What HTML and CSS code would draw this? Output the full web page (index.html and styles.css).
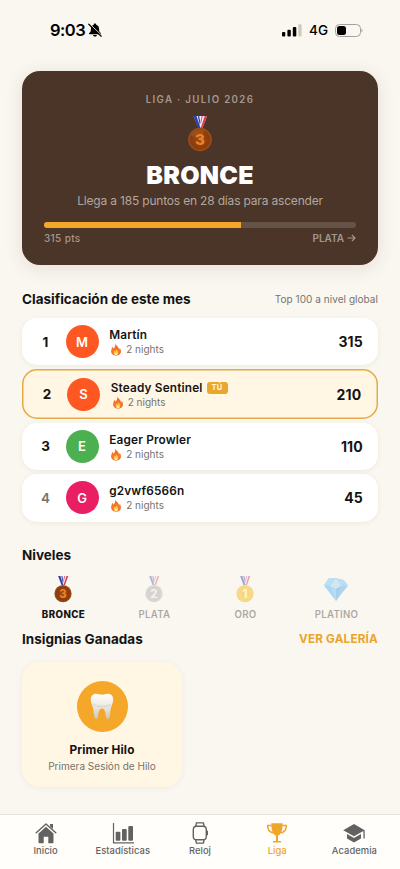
FILE: index.html
```html
<!DOCTYPE html>
<html lang="es">
<head>
<meta charset="utf-8">
<meta name="viewport" content="width=device-width, initial-scale=1">
<title>Liga</title>
<link rel="stylesheet" href="styles.css">
</head>
<body>
<svg class="defs" width="0" height="0" aria-hidden="true">
  <defs>
    <radialGradient id="g-bronze" cx=".5" cy=".5" r=".55"><stop offset="0" stop-color="#a04a10"/><stop offset=".7" stop-color="#8a3c0c"/><stop offset="1" stop-color="#a85a22"/></radialGradient>
    <radialGradient id="g-silver" cx=".5" cy=".5" r=".55"><stop offset="0" stop-color="#8f8f93"/><stop offset=".7" stop-color="#97979b"/><stop offset="1" stop-color="#adadb0"/></radialGradient>
    <radialGradient id="g-gold" cx=".5" cy=".5" r=".55"><stop offset="0" stop-color="#eeb000"/><stop offset=".7" stop-color="#f5b800"/><stop offset="1" stop-color="#e8b030"/></radialGradient>
    <linearGradient id="g-flame" x1="0" y1="0" x2="0" y2="1"><stop offset="0" stop-color="#ef5b30"/><stop offset=".6" stop-color="#f47a28"/><stop offset="1" stop-color="#f0602c"/></linearGradient>
    <linearGradient id="g-tooth" x1="0" y1="0" x2="0" y2="1"><stop offset="0" stop-color="#fffefb"/><stop offset=".45" stop-color="#eeebe5"/><stop offset="1" stop-color="#cfc8ba"/></linearGradient>
    <symbol id="ribbon" viewBox="0 0 24 12">
      <path d="M5.500 0h13.500l-4.500 12h-4z" fill="#f3eef5"/>
      <path d="M5.500 0h3l4 12h-2.500z" fill="#2b3fa8"/><path d="M9.800 0h1.400l1.300 7-.7 2z" fill="#3540a5"/>
      <path d="M19 0h-2.300l-4 12h1.900z" fill="#d43a50"/><path d="M14.700 0h-1l-1 5 .4 2z" fill="#cf4058"/>
    </symbol>
    <symbol id="flame" viewBox="0 0 12 14">
      <path d="M5.300.5C6 2.700 9.200 4.200 9.300 7c.5-.5.7-1.200.6-2 1 1 1.500 2.500 1.500 4 0 2.800-2.300 4.700-5.300 4.700S.7 11.700.7 9c0-1.900 1-3.100 1.200-4.800.9.500 1.300 1.200 1.400 2C4.700 4.800 5.600 3 5.300.5z" fill="url(#g-flame)"/>
      <path d="M6.100 5.900c.1 1.800 2.500 2.700 2.500 4.900 0 1.600-1.100 2.600-2.500 2.600s-2.700-.9-2.700-2.500c0-1.200.7-1.700.9-2.700.5.300.7.700.8 1.100.8-.8 1.200-1.800 1-3.400z" fill="#fdc94a"/>
      <ellipse cx="6.100" cy="11.900" rx="1.100" ry="1.400" fill="#fff0b5"/>
    </symbol>
  </defs>
</svg>

<main class="screen">
  <header class="status">
    <div class="status-left">
      <span class="clock">9:03</span>
      <svg width="14" height="14" viewBox="0 0 14 14"><path d="M7 .6c.8 0 1.200.5 1.200 1.200 2 .6 2.900 2.200 2.900 4.100 0 2.700.6 3.200 1.700 4.200.5.500.2 1.100-.4 1.100H1.600c-.6 0-.9-.6-.4-1.100C2.300 9.100 2.900 8.600 2.900 5.900c0-1.900.9-3.500 2.900-4.100C5.800 1.100 6.200.6 7 .6zM5.100 12h3.800c-.2 1-.9 1.600-1.900 1.600S5.300 13 5.100 12z"/><path d="M1.500.7l12 11.500" stroke="#faf7f0" stroke-width="1"/><path d="M.8 1.200l12.400 12" stroke="#000" stroke-width="1.200" stroke-linecap="round"/></svg>
    </div>
    <div class="status-right">
      <svg width="20" height="13" viewBox="0 0 20 13"><rect x="0" y="8" width="3.300" height="4.500" rx="1"/><rect x="5.400" y="5.700" width="3.400" height="6.800" rx="1"/><rect x="10.800" y="3" width="3.500" height="9.500" rx="1"/><rect x="16.300" y=".3" width="3.300" height="12.200" rx="1" fill="#cbcabd"/></svg>
      <span class="network">4G</span>
      <svg width="28" height="13" viewBox="0 0 28 13"><rect x=".5" y=".5" width="25" height="12" rx="4" fill="none" stroke="#a3a19b"/><rect x="2" y="2" width="9" height="9" rx="2.500"/><path d="M26.500 4.500c1.400.5 1.400 3.500 0 4z" fill="#a3a19b"/></svg>
    </div>
  </header>

  <section class="hero">
    <div class="hero-label">LIGA · JULIO 2026</div>
    <svg class="hero-medal" width="24" height="36" viewBox="0 0 24 36"><use href="#ribbon" width="24" height="12"/><circle cx="12" cy="23.500" r="11.800" fill="url(#g-bronze)"/><path d="M12 13.500a10 10 0 0 0-9 6l9 4 5-9a10 10 0 0 0-5-1z" fill="#b96c35" opacity=".35"/><text class="medal-digit" x="12" y="29" fill="#e8832a">3</text></svg>
    <h1 class="hero-title">BRONCE</h1>
    <p class="hero-sub">Llega a 185 puntos en 28 días para ascender</p>
    <div class="progress"><div class="progress-fill" style="width:63%"></div></div>
    <div class="hero-ends"><span class="points">315 pts</span><span class="next">PLATA <svg width="9" height="8" viewBox="0 0 9 8"><path d="M.5 4h7.500M4.900.9L8 4 4.900 7.100" fill="none" stroke="currentColor" stroke-width="1.200"/></svg></span></div>
  </section>

  <div class="heading heading-rank"><h2>Clasificación de este mes</h2><span class="note">Top 100 a nivel global</span></div>

  <section class="ranking">
    <article class="row">
      <span class="pos">1</span><span class="avatar orange">M</span>
      <div class="who"><div class="name">Martín</div><div class="streak"><svg width="12" height="14"><use href="#flame"/></svg>2 nights</div></div>
      <strong class="score">315</strong>
    </article>
    <article class="row me">
      <span class="pos">2</span><span class="avatar orange">S</span>
      <div class="who"><div class="name">Steady Sentinel<span class="tag">TÚ</span></div><div class="streak"><svg width="12" height="14"><use href="#flame"/></svg>2 nights</div></div>
      <strong class="score">210</strong>
    </article>
    <article class="row">
      <span class="pos">3</span><span class="avatar green">E</span>
      <div class="who"><div class="name">Eager Prowler</div><div class="streak"><svg width="12" height="14"><use href="#flame"/></svg>2 nights</div></div>
      <strong class="score">110</strong>
    </article>
    <article class="row">
      <span class="pos muted">4</span><span class="avatar pink">G</span>
      <div class="who"><div class="name">g2vwf6566n</div><div class="streak"><svg width="12" height="14"><use href="#flame"/></svg>2 nights</div></div>
      <strong class="score">45</strong>
    </article>
  </section>

  <div class="heading heading-levels"><h2>Niveles</h2></div>
  <section class="levels">
    <div class="level current"><svg width="18" height="27" viewBox="0 0 24 36"><use href="#ribbon" width="24" height="12"/><circle cx="12" cy="23.500" r="11.500" fill="url(#g-bronze)"/><text class="medal-digit" x="12" y="29" fill="#e8832a">3</text></svg><span>BRONCE</span></div>
    <div class="level"><svg width="18" height="27" viewBox="0 0 24 36"><use href="#ribbon" width="24" height="12"/><circle cx="12" cy="23.500" r="11.500" fill="url(#g-silver)"/><text class="medal-digit" x="12" y="29" fill="#e9e9eb">2</text></svg><span>PLATA</span></div>
    <div class="level gold"><svg width="18" height="27" viewBox="0 0 24 36"><use href="#ribbon" width="24" height="12"/><circle cx="12" cy="23.500" r="11.500" fill="url(#g-gold)"/><text class="medal-digit" x="12" y="29" fill="#fff3a6">1</text></svg><span>ORO</span></div>
    <div class="level"><svg width="26" height="27" viewBox="0 0 26 27"><path d="M5.500 2.500L1 9.500 13 25 25 9.500 20.500 4 13 2.200z" fill="#1e9bf0"/><path d="M5.500 2.500L1 9.500l6 .5L13 2.200zM20.500 4l4.500 5.500-7 .8L13 2.200z" fill="#48b2f5"/><path d="M7 10l6-7.800 5 8.100L13 13z" fill="#80cdf8"/><path d="M7 10l6 3v12z" fill="#40aff6"/><path d="M18 10.300L13 13v12z" fill="#1080dc"/></svg><span>PLATINO</span></div>
  </section>

  <div class="heading heading-badges"><h2>Insignias Ganadas</h2><a class="gallery">VER GALERÍA</a></div>
  <article class="badge">
    <div class="badge-icon"><svg width="24" height="27" viewBox="0 0 24 27"><path d="M6 .8c2.200 0 3.700.9 6 .9s3.800-.9 6-.9c3.300 0 5.300 2.500 5.200 5.900-.1 2.800-1.200 4.800-2 7.300-1 3.400-.8 6.600-1.700 9.900-.7 2.500-2.700 2.700-3.300.4-.9-3.200-.6-8.800-4.200-8.800s-3.300 5.600-4.200 8.800c-.6 2.300-2.600 2.100-3.300-.4C3.600 20.600 3.800 17.400 2.800 14 2 11.500.9 9.500.8 6.700.7 3.300 2.700.8 6 .8z" fill="url(#g-tooth)"/><path d="M3.500 11c2 2.500 4.500 2.500 8.500 2.500s6.500 0 8.500-2.500" fill="none" stroke="#c9c3b6" stroke-width="1.500" opacity=".45"/></svg></div>
    <h3>Primer Hilo</h3>
    <p>Primera Sesión de Hilo</p>
  </article>
</main>

<nav class="tabs">
  <a class="tab"><svg width="22" height="22" viewBox="0 0 22 22"><path d="M11 4.800l7.500 6.600V20.500a.8.800 0 0 1-.8.800h-4.400v-6.500H8.700v6.500H4.300a.8.800 0 0 1-.8-.8v-9.100z"/><path d="M1.200 10.800L11 1.900l9.800 8.900" fill="none" stroke="currentColor" stroke-width="1.400" stroke-linecap="round" stroke-linejoin="round"/><path d="M15 2h3v5l-3-2.700z"/></svg><span>Inicio</span></a>
  <a class="tab"><svg width="22" height="22" viewBox="0 0 22 22"><path d="M1.500 1v19.800H22" fill="none" stroke="currentColor" stroke-width="1.200"/><rect x="3.700" y="9.700" width="4.700" height="9" rx="1"/><rect x="10" y="7" width="4.700" height="11.700" rx="1"/><rect x="16.300" y="4" width="4.700" height="14.700" rx="1"/></svg><span>Estadísticas</span></a>
  <a class="tab"><svg width="22" height="22" viewBox="0 0 22 22"><g fill="none" stroke="currentColor" stroke-width="1.400"><rect x="4.300" y="4.300" width="13" height="13.500" rx="3.300"/><path d="M6.700 4.300L7.400.9h7l.7 3.400M6.700 17.800l.7 3.300h7l.7-3.300M18.300 8.700v4.500"/></g></svg><span>Reloj</span></a>
  <a class="tab active"><svg width="22" height="22" viewBox="0 0 22 22"><path d="M5.300 1.200h11.400c0 6-1 11.200-4.700 12.400v5.300h2.300c.5 0 .8.500.8 1v.7H6.900v-.7c0-.5.300-1 .8-1H10v-5.300C6.300 12.400 5.300 7.200 5.300 1.200z"/><path d="M5.400 3.500H1.700C1.500 7.300 3.300 9.900 7 11M16.600 3.500h3.700c.2 3.800-1.600 6.400-5.300 7.500" fill="none" stroke="currentColor" stroke-width="1.500"/></svg><span>Liga</span></a>
  <a class="tab"><svg width="22" height="22" viewBox="0 0 22 22"><path d="M11 2L.2 8.300 11 14.300l9.400-5.200v7.500h1.300V8.300z"/><path d="M4 12.100v4.300l7 4 7-4v-4.300l-7 3.900z"/></svg><span>Academia</span></a>
</nav>
</body>
</html>
```
FILE: styles.css
```css
* { box-sizing: border-box; }
html, body { margin: 0; height: 869px; overflow: hidden; }
body { display: flex; flex-direction: column; background: #faf7f0; font-family: Inter, "Liberation Sans", sans-serif; color: #141414; }
h1, h2, h3, p { margin: 0; }
svg { display: block; flex: none; fill: currentColor; }
.defs { position: absolute; }

.screen { height: 814px; padding: 0 22px; }

.status { height: 71px; padding: 20px 15px 0 28px; display: flex; justify-content: space-between; align-items: flex-start; color: #000; }
.status-left, .status-right { display: flex; align-items: center; height: 20px; }
.clock { font-size: 16.500px; font-weight: 600; letter-spacing: -.5px; margin-right: 3px; }
.network { font-size: 13.500px; font-weight: 500; margin: 0 7px 0 7px; }
.status-right { margin-right: 0; }

.hero { height: 194px; padding: 22px 22px 0; border-radius: 18px; background: #4a3528; text-align: center; box-shadow: 0 3px 18px rgba(74, 53, 40, .12); display: flex; flex-direction: column; align-items: center; }
.hero-label { font-size: 9.700px; line-height: 13px; font-weight: 600; letter-spacing: 1.350px; color: #a4988e; }
.hero-medal { margin-top: 10px; }
.medal-digit { font: 800 15px Inter, sans-serif; text-anchor: middle; }
.hero-title { margin-top: 8px; font-size: 25px; line-height: 30px; font-weight: 900; letter-spacing: .25px; color: #fff; }
.hero-sub { margin-top: 3px; font-size: 12px; line-height: 15px; letter-spacing: -.18px; color: #b3a79e; white-space: nowrap; }
.progress { width: 100%; height: 6px; margin-top: 14px; border-radius: 3px; background: #665348; overflow: hidden; }
.progress-fill { height: 100%; background: #f4a728; }
.hero-ends { width: 100%; display: flex; justify-content: space-between; margin-top: 4px; font-size: 10px; line-height: 12px; font-weight: 500; color: #a4988e; }
.points { letter-spacing: .35px; }
.next { display: flex; align-items: center; gap: 3px; font-weight: 600; }

.heading { display: flex; justify-content: space-between; align-items: center; }
.heading h2 { font-size: 13.500px; line-height: 18px; font-weight: 700; }
.heading-rank { margin-top: 25px; }
.note { font-size: 10px; color: #77736e; letter-spacing: .05px; }

.ranking { margin-top: 10px; display: flex; flex-direction: column; gap: 4px; }
.row { height: 47.400px; padding: 0 15px 0 16px; display: flex; align-items: center; border-radius: 15px; background: #fff; box-shadow: 0 1px 5px rgba(70, 50, 30, .07); }
.row.me { height: 49.400px; padding: 0 16.500px 0 17.500px; background: #fff7e4; box-shadow: inset 0 0 0 1.500px #e5aa45; }
.pos { width: 15px; font-size: 13.500px; font-weight: 700; text-align: center; }
.pos.muted { color: #77736e; font-weight: 600; }
.avatar { width: 33px; height: 33px; margin-left: 12.500px; border-radius: 50%; display: flex; align-items: center; justify-content: center; color: #fff; font-size: 13px; font-weight: 600; }
.orange { background: #ff5722; }
.green { background: #4caf50; }
.pink { background: #e91e63; }
.who { flex: 1; margin-left: 10.700px; padding-top: 1px; }
.name { display: flex; align-items: center; font-size: 11.800px; line-height: 15px; font-weight: 600; letter-spacing: .17px; }
.tag { margin-left: 4px; width: 21px; height: 12px; border-radius: 3px; background: #eaa72f; color: #fff6df; font-size: 7.500px; line-height: 12px; font-weight: 700; text-align: center; letter-spacing: .4px; }
.streak { display: flex; align-items: center; gap: 5px; font-size: 10px; line-height: 13px; color: #77736e; }
.streak svg { height: 13px; margin-left: 1px; margin-right: -1px; }
.score { font-size: 14px; font-weight: 700; letter-spacing: .2px; }

.heading-levels { margin-top: 24.400px; }
.levels { display: grid; grid-template-columns: repeat(4, 1fr); margin: 12px -4px 0; height: 45px; }
.level { display: flex; flex-direction: column; align-items: center; opacity: .35; font-size: 9.700px; line-height: 12px; font-weight: 600; letter-spacing: .25px; }
.level span { margin-top: 6px; }
.level svg { margin-right: 1px; }
.gold { opacity: .45; }
.gold span { opacity: .78; }
.current { opacity: 1; font-weight: 800; letter-spacing: .4px; }

.heading-badges { margin-top: 9px; }
.gallery { font-size: 11.700px; font-weight: 700; letter-spacing: .2px; color: #e9a42c; }
.badge { width: 160px; height: 125px; margin-top: 14px; padding-top: 19px; display: flex; flex-direction: column; align-items: center; border-radius: 18px; background: #fff7e4; box-shadow: 0 1px 6px rgba(70, 50, 30, .06); }
.badge-icon { width: 51px; height: 51px; border-radius: 50%; display: flex; align-items: center; justify-content: center; background: #f4a728; }
.badge h3 { margin-top: 10px; font-size: 11.800px; line-height: 16px; font-weight: 700; letter-spacing: .15px; }
.badge p { margin-top: 1px; font-size: 10px; line-height: 14px; letter-spacing: .02px; color: #77736e; }

.tabs { height: 55px; padding: 7px 7px 0; border-top: 1px solid #e7e2da; background: #fffefb; display: grid; grid-template-columns: repeat(5, 1fr); color: #626262; }
.tab { display: flex; flex-direction: column; align-items: center; font-size: 9.400px; line-height: 12px; font-weight: 500; letter-spacing: .05px; }
.tab span { margin-top: 1px; }
.tab.active { color: #f0a52b; }
```
